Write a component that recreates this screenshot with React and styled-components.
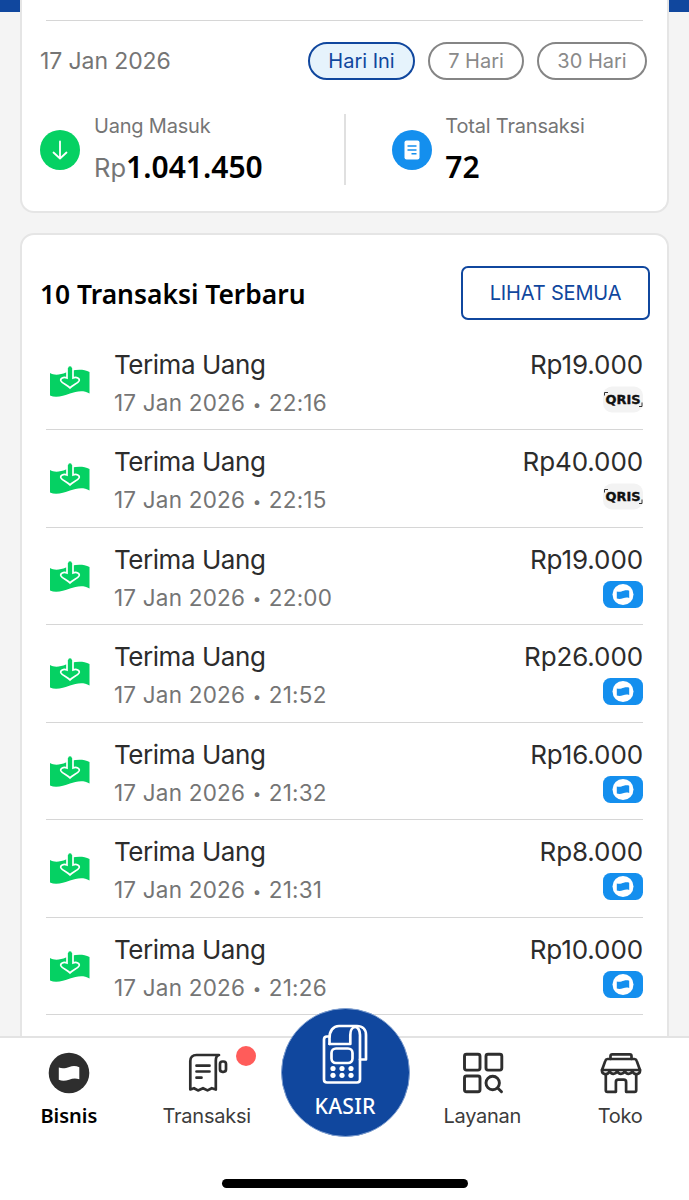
import React from 'react';
import styled, { createGlobalStyle, css } from 'styled-components';

const GlobalStyle = createGlobalStyle`
  * {
    box-sizing: border-box;
  }

  body {
    margin: 0;
    background: #fff;
    font-family: Inter, 'Liberation Sans', sans-serif;
    color: #2c2c2c;
  }

  button {
    padding: 0;
    background: none;
    border: 0;
    font-family: inherit;
    color: inherit;
  }
`;

const headingFont = "'Noto Sans', 'Open Sans', sans-serif";

const Screen = styled.div`
  display: flex;
  flex-direction: column;
  width: 689px;
  height: 1200px;
  overflow: hidden;
`;

const Content = styled.main`
  height: 1036px;
  padding: 0 20px;
  overflow: hidden;
  background: linear-gradient(#10479e 12px, #f4f4f4 12px);
`;

const Card = styled.section`
  background: #fff;
  border: 2px solid #e5e5e5;
`;

const SummaryCard = styled(Card)`
  height: 213px;
  padding: 20px 20px 0 18px;
  border-top: 0;
  border-radius: 0 0 14px 14px;
`;

const Rule = styled.hr`
  height: 1px;
  margin: 0 4px 0 6px;
  border: 0;
  background: #d6d6d6;
`;

const FilterRow = styled.div`
  display: flex;
  align-items: center;
  gap: 13px;
  margin-top: 21px;
`;

const DateLabel = styled.div`
  flex-grow: 1;
  font-size: 23px;
  letter-spacing: -0.1px;
  color: #757575;
`;

const Pill = styled.button`
  width: ${props => props.$width}px;
  height: 38px;
  border: 2px solid #858585;
  border-radius: 19px;
  font-size: 20px;
  color: #8a8a8a;

  ${props => props.$active && css`
    border-color: #10479e;
    background: #e6f3fc;
    color: #10479e;
  `}
`;

const Stats = styled.div`
  display: flex;
  margin-top: 34px;
  height: 71px;
`;

const Stat = styled.div`
  display: flex;
  align-items: center;
  gap: 14px;
  width: 304px;

  & + & {
    gap: 13px;
    padding-left: 46px;
    border-left: 2px solid #e0e0e0;
  }

  &:first-child {
    width: 306px;
  }
`;

const StatIcon = styled.div`
  display: flex;
  flex-shrink: 0;
  width: 40px;
  height: 40px;
  border-radius: 50%;
  background: ${props => props.$color};
`;

const StatLabel = styled.div`
  font-size: 20px;
  line-height: 24px;
  letter-spacing: -0.2px;
  white-space: nowrap;
  color: #757575;
`;

const StatValue = styled.div`
  height: 40px;
  margin-top: 8px;
  font-family: ${headingFont};
  font-size: 30px;
  font-weight: 600;
  line-height: 42px;
  color: #000;
`;

const Currency = styled.span`
  font-family: Inter, sans-serif;
  font-size: 25.5px;
  font-weight: 400;
  vertical-align: 1px;
  color: #757575;
`;

const ListCard = styled(Card)`
  height: 900px;
  margin-top: 20px;
  padding: 31px 17px 0 18px;
  border-radius: 14px;
`;

const ListHeader = styled.header`
  display: flex;
  align-items: center;
  justify-content: space-between;
`;

const Title = styled.h2`
  margin: 2px 0 0;
  font-family: ${headingFont};
  font-size: 26.4px;
  font-weight: 600;
  color: #000;
`;

const OutlineButton = styled.button`
  width: 189px;
  height: 54px;
  border: 2px solid #10479e;
  border-radius: 7px;
  font-size: 20px;
  letter-spacing: -0.15px;
  color: #10479e;
`;

const List = styled.ul`
  margin: 13px 7px 0 6px;
  padding: 0;
`;

const Row = styled.li`
  display: flex;
  height: 97.45px;
  padding-top: 13px;
  list-style: none;
  border-bottom: 1px solid #d6d6d6;
`;

const RowIcon = styled.svg`
  flex-shrink: 0;
  width: 40px;
  height: 34px;
  margin: 18px 24px 0 4px;
`;

const RowBody = styled.div`
  flex-grow: 1;
`;

const RowTitle = styled.div`
  font-size: 26px;
  line-height: 38px;
  letter-spacing: -0.45px;
`;

const Amount = styled(RowTitle)`
  letter-spacing: -0.1px;
`;

const RowTime = styled.div`
  font-size: 22.5px;
  line-height: 38px;
  letter-spacing: 0.2px;
  color: #757575;
`;

const Bullet = styled.span`
  margin: 0 1px;
  font-size: 15px;
  vertical-align: 1.5px;
`;

const RowEnd = styled.div`
  display: flex;
  flex-direction: column;
  align-items: flex-end;
`;

const Badge = styled.svg`
  width: 40px;
  height: 27px;
  margin-top: 2px;
`;

const Nav = styled.nav`
  display: flex;
  height: 126px;
  border-top: 2px solid #e3e3e3;
  background: #fff;
`;

const NavItem = styled.a`
  position: relative;
  display: flex;
  flex: 1;
  flex-direction: column;
  align-items: center;
  padding-top: 13px;
  font-size: 20px;
  line-height: 24px;
  letter-spacing: -0.25px;
  color: #3c3c3c;

  svg {
    width: 44px;
    height: 44px;
    margin: 0 -1px 9px 0;
  }

  ${props => props.$active && css`
    font-family: ${headingFont};
    font-weight: 600;
    letter-spacing: 0;
    color: #000;
  `}
`;

const Dot = styled.span`
  position: absolute;
  top: 8px;
  left: 98px;
  width: 20px;
  height: 20px;
  border-radius: 50%;
  background: #ff5c5a;
`;

const KasirSlot = styled.div`
  position: relative;
  flex: 1;
`;

const KasirButton = styled.button`
  position: absolute;
  top: -30px;
  left: 5px;
  display: flex;
  flex-direction: column;
  align-items: center;
  width: 129px;
  height: 129px;
  padding-top: 15px;
  border: 1px solid #7f9fd0;
  border-radius: 50%;
  background: #10479e;
  font-family: ${headingFont};
  font-size: 21.3px;
  font-weight: 500;
  line-height: 28px;
  letter-spacing: 0.2px;
  color: #fff;

  svg {
    width: 46px;
    height: 60px;
    margin-bottom: 8px;
  }
`;

const HomeArea = styled.footer`
  display: flex;
  justify-content: center;
  height: 38px;
  padding-top: 17px;
`;

const HomeIndicator = styled.div`
  width: 246px;
  height: 9px;
  border-radius: 5px;
  background: #000;
`;

const ArrowDownIcon = () => (
  <svg width="40" height="40" fill="none" stroke="#fff" strokeWidth="1.8" strokeLinecap="round" strokeLinejoin="round">
    <path d="M20 11.5V28M13.5 22.5l6.5 6 6.5-6" />
  </svg>
);

const NoteIcon = () => (
  <svg width="40" height="40" fill="none">
    <rect x="12.5" y="10.5" width="15" height="19" rx="2" fill="#fff" />
    <path d="M15.5 16h9M15.5 20h9M19.5 23.7h5" stroke="#148fee" strokeWidth="1.6" />
  </svg>
);

const ReceiveIcon = () => (
  <RowIcon viewBox="0 0 40 34" fill="none">
    <path d="M0 9c4 2.500 10 2 16-.5S32 4 39.500 8v21.500c-6.500-4-13.500-2-19.500 0-7 2.500-14 4.500-20 2z" fill="#05d163" />
    <path
      d="M17 4v10c-3.500-1.500-7.200.3-6 3 1.200 2.500 6 3.700 9 7 3-3.300 7.800-4.500 9-7 1.200-2.700-2.500-4.500-6-3V4"
      fill="#05d163"
      stroke="#fff"
      strokeWidth="1.700"
    />
    <path d="M20 4v15" stroke="#05d163" strokeWidth="3.600" strokeLinecap="round" />
  </RowIcon>
);

const QrisBadge = () => (
  <Badge viewBox="0 0 40 27">
    <rect y="0.5" width="40" height="26" rx="9" fill="#f3f3f3" />
    <path d="M1.500 9.500V6.500H5M39 16.500v4H36" fill="none" stroke="#333" />
    <text
      x="2.5"
      y="18"
      fontFamily="DejaVu Sans, sans-serif"
      fontSize="12.6"
      fontWeight="700"
      textLength="35"
      lengthAdjust="spacingAndGlyphs"
      fill="#111"
      stroke="#111"
      strokeWidth="0.4"
    >
      QRIS
    </text>
  </Badge>
);

const WalletBadge = () => (
  <Badge viewBox="0 0 40 27">
    <rect width="40" height="27" rx="7.5" fill="#148fee" />
    <circle cx="20" cy="13.5" r="10.5" fill="#fff" />
    <path d="M13.800 10.500c3 .8 4.800-.2 7-.8 2-.6 3.800-.6 5.400 0v7.300c-2.200-.7-4-.4-6.200.3-2.200.7-4.200.9-6.200.2z" fill="#148fee" />
  </Badge>
);

const BisnisIcon = () => (
  <svg viewBox="0 0 44 44">
    <circle cx="22" cy="22" r="20.3" fill="#2e2e2e" />
    <path d="M11.800 16.500c4 1.600 7.200.5 10.500-.6 3.400-1.100 6.600-1.200 10 .4v12c-4-1.300-6.800-.7-10.200.4-3.600 1.200-7 1.600-10.300 0z" fill="#fff" />
  </svg>
);

const TransaksiIcon = () => (
  <svg viewBox="0 0 44 44" fill="none" stroke="#2e2e2e" strokeWidth="2.7" strokeLinecap="round" strokeLinejoin="round">
    <path d="M34 4H11.500C7.500 4 5.300 6.500 5.300 10v28.500l3.700-1.300 4 2.200 5-2.200 4.500 2.200 4.300-2.200 4 1.300V9.500C30.800 6.500 32 4.500 34 4z" />
    <path d="M11.500 14.700h13M11.500 20.500h13M11.500 26.700h5" />
    <rect x="35" y="10.5" width="6" height="10.3" rx="2.5" />
  </svg>
);

const LayananIcon = () => (
  <svg viewBox="0 0 44 44" fill="none" stroke="#2e2e2e" strokeWidth="2.9" strokeLinecap="round" strokeLinejoin="round">
    <rect x="3.5" y="3.3" width="15.5" height="15.8" rx="2" />
    <rect x="25" y="3.3" width="15.8" height="15.8" rx="2" />
    <rect x="3.5" y="25" width="15.5" height="15.8" rx="2" />
    <circle cx="31.7" cy="32" r="6.7" />
    <path d="M36.700 37l3.800 3.800" />
  </svg>
);

const TokoIcon = () => (
  <svg viewBox="0 0 44 44" fill="none" stroke="#2e2e2e" strokeWidth="2.7" strokeLinecap="round" strokeLinejoin="round">
    <path d="M11.500 8V5c0-1 .7-1.700 1.700-1.700h17.600c1 0 1.700.7 1.700 1.700v3" />
    <path d="M8.500 8h27c1 0 1.800.6 2.100 1.600L41 19H3l3.400-9.400C6.700 8.600 7.500 8 8.500 8z" />
    <path d="M3 19c-.5 5 6 5.500 7.600 1 1.500 3.700 6 3.700 7.600 0 1.500 3.700 6 3.700 7.600 0 1.500 3.700 6 3.700 7.600 0 1.500 4.500 8.100 4 7.600-1" />
    <path d="M6.800 24v15.200c0 1 .6 1.600 1.600 1.600h8.500V31c0-1.500.8-2.300 2.300-2.300h5.600c1.500 0 2.300.8 2.300 2.300v9.800h8.500c1 0 1.600-.6 1.600-1.600V24" />
  </svg>
);

const KasirIcon = () => (
  <svg viewBox="0 0 46 60" fill="none" stroke="#fff" strokeWidth="2.7" strokeLinecap="round" strokeLinejoin="round">
    <path d="M7.500 12.500H5c-2 0-3 1.200-3 3v40c0 2 1.200 3 3 3h30c2 0 3-1.200 3-3V12" />
    <path d="M7.500 20v-6C7.500 7 11 2 17 2h18c5.500 0 9 3.500 9 9v24.500h-6" />
    <path d="M7.500 20h20.800v-9c0-5 2.200-8 4.900-8S38 6.500 38 11" />
    <rect x="9.5" y="24.5" width="21" height="14.5" rx="4.5" />
    <g fill="#fff" stroke="none">
      {[11, 20, 29].map(x => (
        <React.Fragment key={x}>
          <circle cx={x} cy="44.5" r="2.6" />
          <circle cx={x} cy="51.3" r="2.6" />
        </React.Fragment>
      ))}
    </g>
  </svg>
);

const transactions = [
  { time: '22:16', amount: 'Rp19.000', qris: true },
  { time: '22:15', amount: 'Rp40.000', qris: true },
  { time: '22:00', amount: 'Rp19.000' },
  { time: '21:52', amount: 'Rp26.000' },
  { time: '21:32', amount: 'Rp16.000' },
  { time: '21:31', amount: 'Rp8.000' },
  { time: '21:26', amount: 'Rp10.000' },
];

const renderTransactions = items => (
  items.map(item => (
    <Row key={item.time}>
      <ReceiveIcon />
      <RowBody>
        <RowTitle>Terima Uang</RowTitle>
        <RowTime>17 Jan 2026 <Bullet>•</Bullet> {item.time}</RowTime>
      </RowBody>
      <RowEnd>
        <Amount>{item.amount}</Amount>
        {item.qris ? <QrisBadge /> : <WalletBadge />}
      </RowEnd>
    </Row>
  ))
);

const App = () => (
  <Screen>
    <GlobalStyle />
    <Content>
      <SummaryCard>
        <Rule />
        <FilterRow>
          <DateLabel>17 Jan 2026</DateLabel>
          <Pill $width={107} $active>Hari Ini</Pill>
          <Pill $width={96}>7 Hari</Pill>
          <Pill $width={110}>30 Hari</Pill>
        </FilterRow>
        <Stats>
          <Stat>
            <StatIcon $color="#05d163"><ArrowDownIcon /></StatIcon>
            <div>
              <StatLabel>Uang Masuk</StatLabel>
              <StatValue><Currency>Rp</Currency>1.041.450</StatValue>
            </div>
          </Stat>
          <Stat>
            <StatIcon $color="#148fee"><NoteIcon /></StatIcon>
            <div>
              <StatLabel>Total Transaksi</StatLabel>
              <StatValue>72</StatValue>
            </div>
          </Stat>
        </Stats>
      </SummaryCard>
      <ListCard>
        <ListHeader>
          <Title>10 Transaksi Terbaru</Title>
          <OutlineButton>LIHAT SEMUA</OutlineButton>
        </ListHeader>
        <List>{renderTransactions(transactions)}</List>
      </ListCard>
    </Content>
    <Nav>
      <NavItem $active><BisnisIcon />Bisnis</NavItem>
      <NavItem><TransaksiIcon />Transaksi<Dot /></NavItem>
      <KasirSlot>
        <KasirButton><KasirIcon />KASIR</KasirButton>
      </KasirSlot>
      <NavItem><LayananIcon />Layanan</NavItem>
      <NavItem><TokoIcon />Toko</NavItem>
    </Nav>
    <HomeArea><HomeIndicator /></HomeArea>
  </Screen>
);

export default App;
